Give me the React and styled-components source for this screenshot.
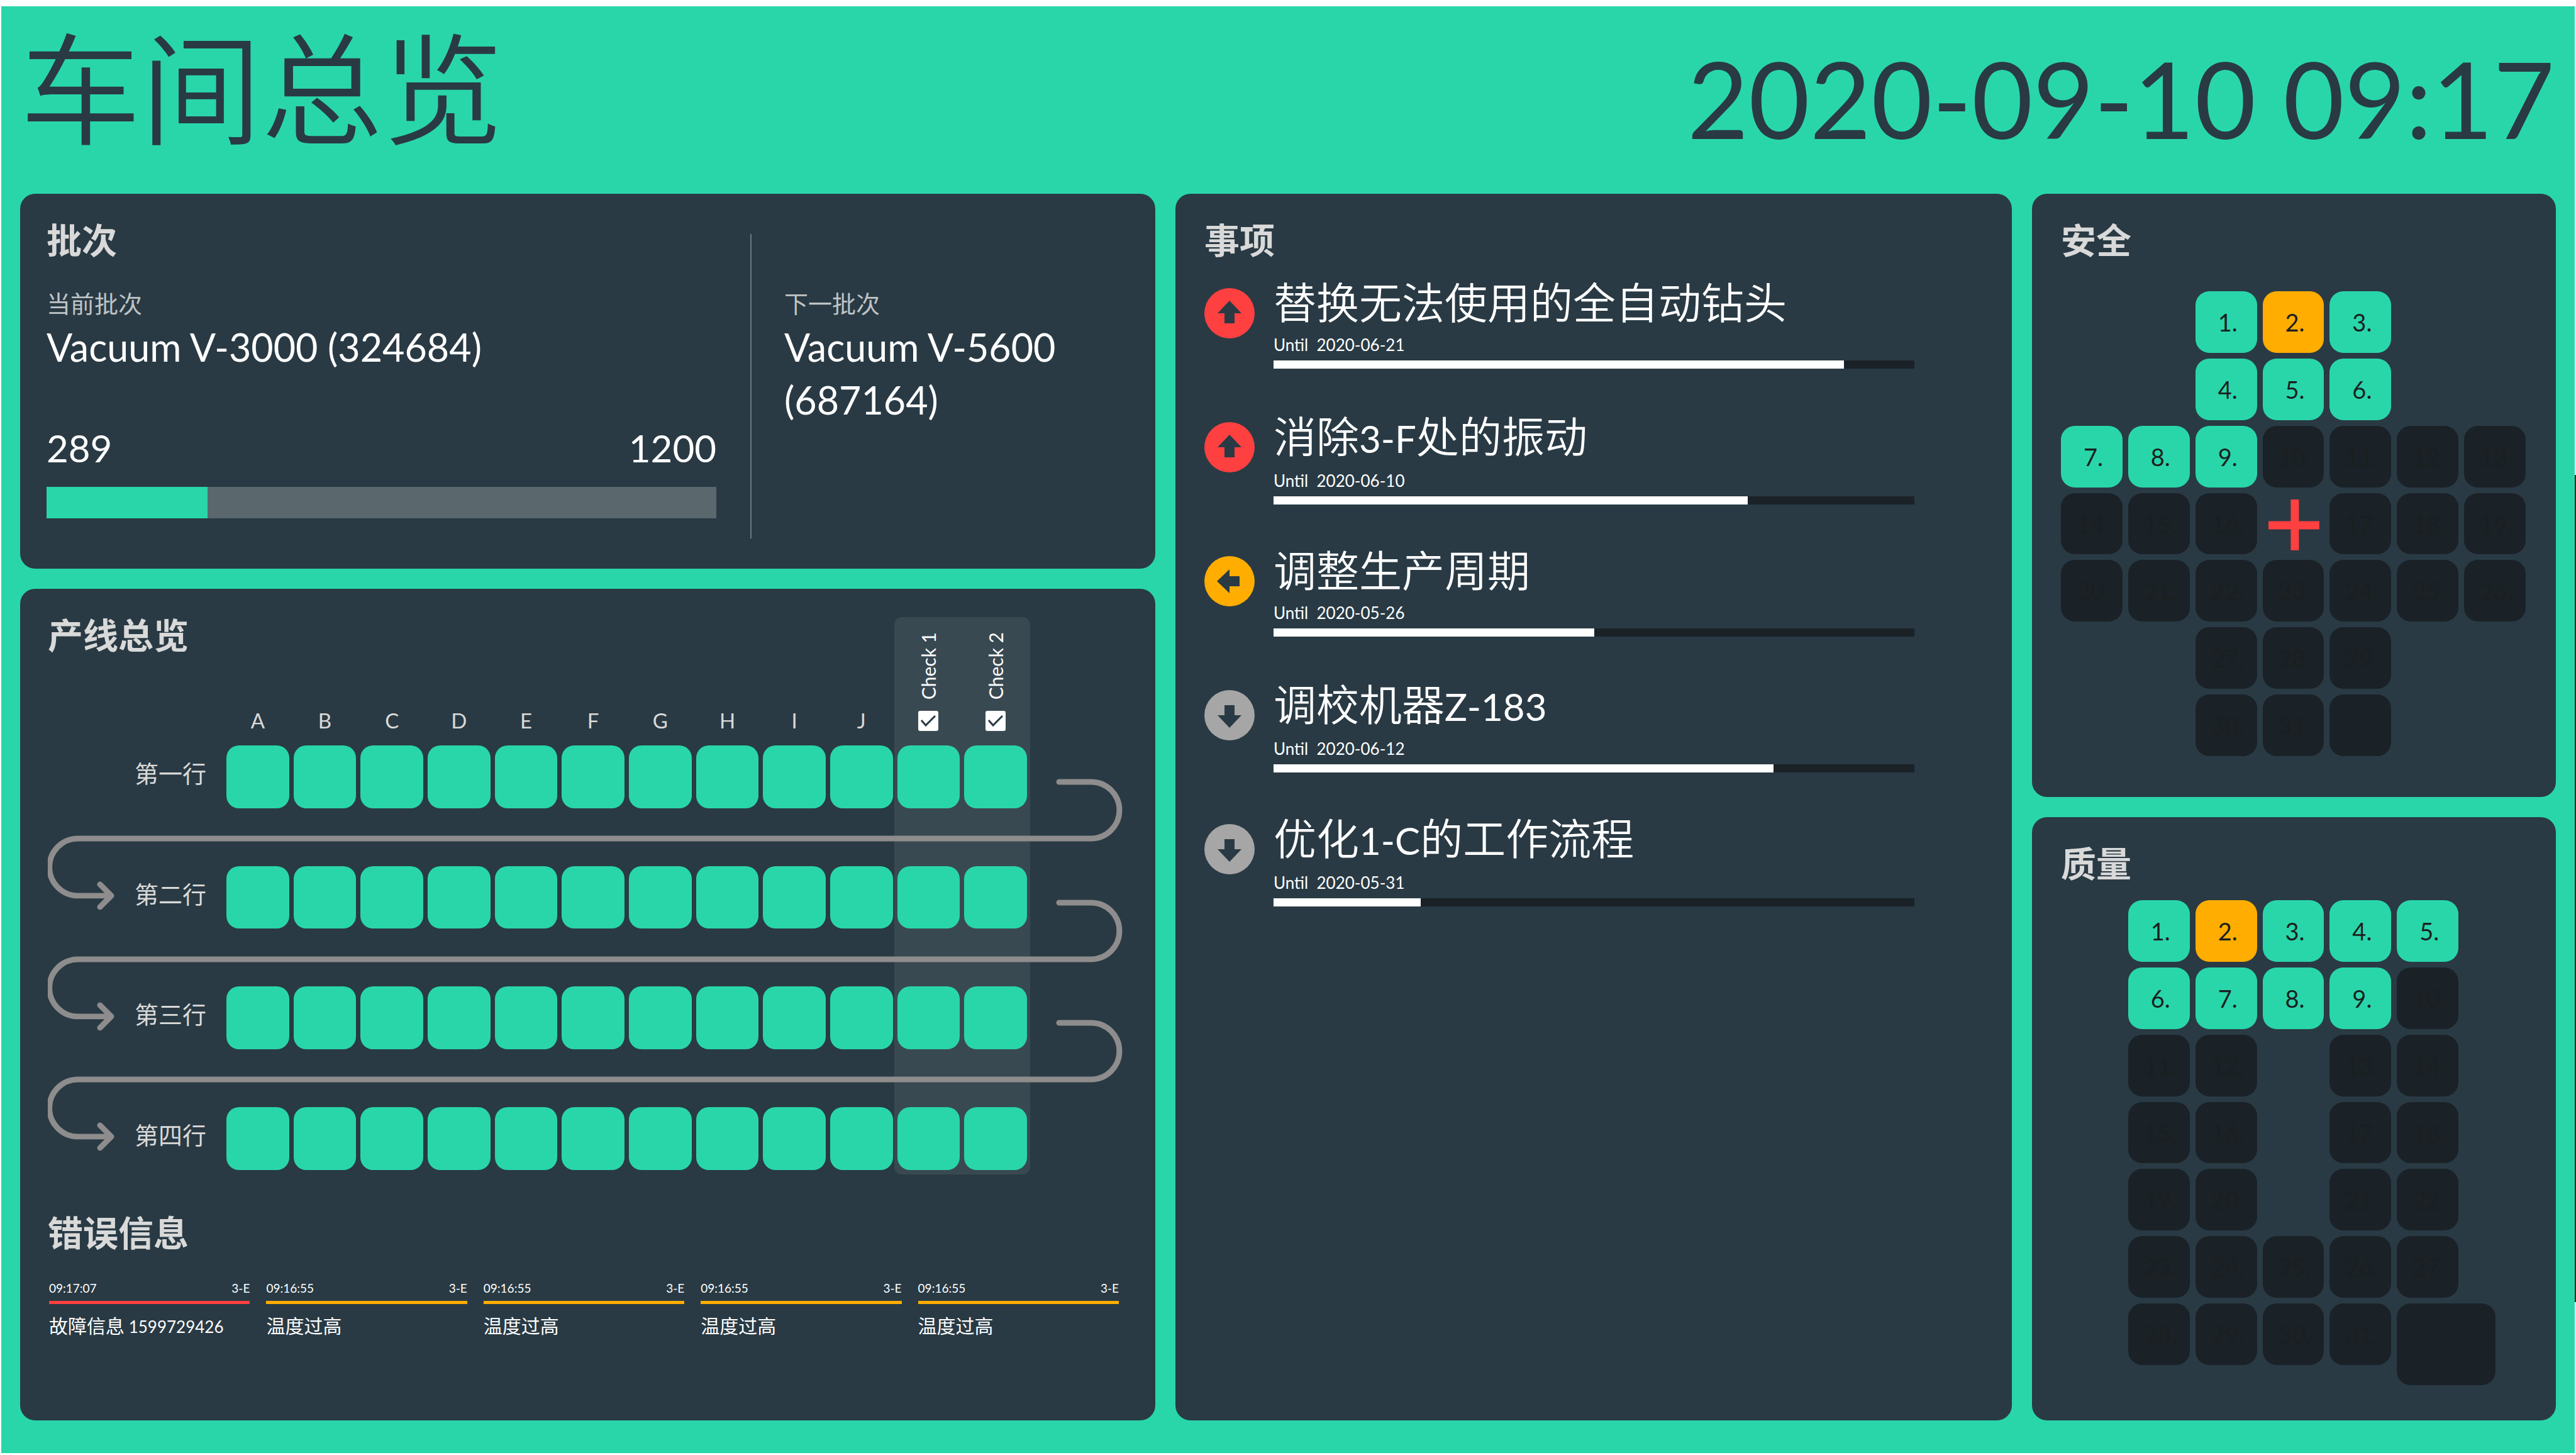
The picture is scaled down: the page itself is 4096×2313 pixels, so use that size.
import React from "react";
import styled, { createGlobalStyle } from "styled-components";

const c = {
  teal: "#29d6aa",
  panel: "#293a44",
  dark: "#1a2127",
  red: "#ff4040",
  orange: "#ffad00",
  grey: "#a6a6a6",
  line: "#8e8c8c",
  muted: "#d9d9d9",
};

const Global = createGlobalStyle`
  * { box-sizing: border-box; }
  body {
    margin: 0;
    background: #fff;
    color: #fff;
    font-family: Lato, "Noto Sans CJK SC", sans-serif;
  }
  h1, h2, h3, p, ul { margin: 0; padding: 0; list-style: none; }
`;

const Screen = styled.div`
  min-height: 100vh;
  display: flex;
  padding: 10px 0 3px 2px;
`;
const Page = styled.div`
  flex: 1;
  min-width: 0;
  display: flex;
  flex-direction: column;
  background: ${c.teal};
`;
const Edge = styled.div`
  width: 2px;
  margin: 745px 0 240px;
  background: ${c.dark};
`;
const Header = styled.header`
  display: flex;
  justify-content: space-between;
  height: 298px;
  padding: 0 32px 0 30px;
  color: ${c.panel};
`;
const Title = styled.h1`
  font-size: 192px;
  line-height: 262px;
  font-weight: 350;
`;
const Clock = styled.time`
  font-size: 168px;
  line-height: 292px;
`;
const Main = styled.main`
  flex: 1;
  display: grid;
  grid-template-columns: minmax(0, 1805fr) minmax(0, 1330fr) minmax(0, 833fr);
  gap: 32px;
  padding: 0 30px 52px;
`;
const Column = styled.div`
  display: flex;
  flex-direction: column;
  gap: 32px;
  min-width: 0;
`;
const Panel = styled.section`
  flex: ${(p) => (p.$grow ? "1 1 0" : "none")};
  padding: 32px 48px 32px 46px;
  border-radius: 24px;
  background: ${c.panel};
`;
const Heading = styled.h2`
  font-size: 56px;
  line-height: 84px;
  font-weight: 700;
  color: ${c.muted};
`;

const BatchPanel = styled(Panel)`
  display: grid;
  grid-template-columns: minmax(0, 1119fr) minmax(0, 600fr);
  padding: 32px 44px 48px 42px;
`;
const Current = styled.div`
  padding: 0 54px 32px 0;
`;
const Next = styled.div`
  margin-top: 32px;
  padding: 82px 80px 0 52px;
  border-left: 2px solid #6c7780;
`;
const Caption = styled.p`
  font-size: 38px;
  line-height: 56px;
  color: #bfc3c6;
`;
const CurrentCaption = styled(Caption)`
  margin-top: 30px;
`;
const Name = styled.p`
  font-size: 61px;
  line-height: 84px;
`;
const Counts = styled.div`
  display: flex;
  justify-content: space-between;
  margin-top: 76px;
  font-size: 60px;
  line-height: 84px;
`;
const Bar = styled.div`
  height: ${(p) => p.$size}px;
  margin-top: ${(p) => p.$gap}px;
  background: ${(p) => p.$track};
`;
const Fill = styled.div`
  height: 100%;
  background: ${(p) => p.$color};
`;

const LinePanel = styled(Panel)`
  padding: 32px 46px 32px 44px;
`;
const Board = styled.div`
  display: grid;
  grid-template-columns: 277px repeat(12, minmax(0, 1fr)) 151px;
  column-gap: 7px;
  margin-top: -71px;
`;
const Zone = styled.div`
  grid-area: 1 / 12 / 6 / 14;
  margin: 0 -5px -7px;
  border-radius: 12px;
  background: rgba(255, 255, 255, 0.08);
`;
const HeadCell = styled.div`
  grid-row: 1;
  grid-column: ${(p) => p.$col};
  height: 204px;
  display: flex;
  align-items: flex-end;
  justify-content: center;
  padding-bottom: 20px;
  font-size: 33px;
  line-height: 40px;
  color: ${c.muted};
`;
const Check = styled.label`
  display: flex;
  flex-direction: column;
  align-items: center;
  gap: 18px;
  padding-bottom: 3px;
  font-size: 30px;
  color: #fff;
`;
const Upright = styled.span`
  writing-mode: vertical-rl;
  transform: rotate(180deg);
`;
const Tick = styled.span`
  display: grid;
  & > * { grid-area: 1 / 1; }
  svg { width: 32px; height: 32px; pointer-events: none; }
`;
const Box = styled.input`
  appearance: none;
  width: 32px;
  height: 32px;
  margin: 0;
  border-radius: 3px;
  background: #fff;
  &:not(:checked) + svg { visibility: hidden; }
`;
const RowLabel = styled.div`
  grid-row: ${(p) => p.$row};
  grid-column: 1;
  justify-self: end;
  padding-right: 25px;
  font-size: 38px;
  line-height: 88px;
  color: ${c.muted};
`;
const Station = styled.div`
  grid-row: ${(p) => p.$row};
  grid-column: ${(p) => p.$col};
  aspect-ratio: 1;
  margin-bottom: ${(p) => (p.$last ? 0 : 92)}px;
  border-radius: 20px;
  background: ${c.teal};
  z-index: 1;
`;
const Connector = styled.svg`
  grid-row: ${(p) => p.$row} / span 2;
  grid-column: 1 / -1;
  align-self: start;
  width: 100%;
  margin-top: 50px;
  fill: none;
  stroke: ${c.line};
  stroke-width: 9;
  stroke-linecap: round;
  stroke-linejoin: round;
`;
const ErrorHeading = styled(Heading)`
  margin-top: 58px;
`;
const Errors = styled.ul`
  display: grid;
  grid-template-columns: repeat(5, minmax(0, 1fr));
  gap: 26px;
  margin-top: 34px;
  padding: 0 12px 0 2px;
`;
const ErrorMeta = styled.div`
  display: flex;
  justify-content: space-between;
  padding-bottom: 8px;
  border-bottom: 5px solid ${(p) => p.$color};
  font-size: 19px;
  line-height: 24px;
`;
const ErrorText = styled.p`
  margin-top: 12px;
  font-size: 30px;
  line-height: 44px;
  white-space: nowrap;
`;
const Latin = styled.span`
  font-size: ${(p) => p.$size}px;
`;

const Tasks = styled.ul`
  display: grid;
  gap: 45px;
  margin-top: 6px;
  padding-right: 107px;
`;
const Task = styled.li`
  display: grid;
  grid-template-columns: 80px minmax(0, 1fr);
  column-gap: 30px;
  height: 168px;
`;
const Badge = styled.svg`
  width: 80px;
  height: 80px;
  margin-top: 28px;
`;
const TaskTitle = styled.h3`
  font-size: 68px;
  line-height: 102px;
  font-weight: 350;
`;
const TaskLatin = styled(Latin)`
  font-weight: 400;
`;
const Until = styled.p`
  font-size: 26px;
  line-height: 32px;
  white-space: pre;
`;

const Calendar = styled.div`
  display: grid;
  grid-template-columns: repeat(7, minmax(0, 1fr));
  gap: 9px;
  margin-top: ${(p) => p.$gap}px;
`;
const Day = styled.div`
  grid-row: ${(p) => p.$row};
  grid-column: ${(p) => p.$col};
  aspect-ratio: 1;
  display: flex;
  align-items: center;
  justify-content: center;
  padding-left: 5px;
  border-radius: 22px;
  background: ${(p) => p.$color};
  color: #1b1f20;
  font-size: 38px;
  line-height: 48px;
`;
const WideDay = styled(Day)`
  aspect-ratio: auto;
  width: 160%;
  height: 130px;
  margin-bottom: -33px;
`;
const Cross = styled.svg`
  grid-row: 4;
  grid-column: 4;
  width: 100%;
`;

const ARROWS = { up: 0, left: -90, down: 180 };
const TASKS = [
  ["替换无法使用的全自动钻头", "2020-06-21", 89, "up", c.red],
  ["消除3-F处的振动", "2020-06-10", 74, "up", c.red],
  ["调整生产周期", "2020-05-26", 50, "left", c.orange],
  ["调校机器Z-183", "2020-06-12", 78, "down", c.grey],
  ["优化1-C的工作流程", "2020-05-31", 23, "down", c.grey],
];
const ERRORS = [
  ["09:17:07", "3-E", "故障信息 1599729426", c.red],
  ["09:16:55", "3-E", "温度过高", c.orange],
  ["09:16:55", "3-E", "温度过高", c.orange],
  ["09:16:55", "3-E", "温度过高", c.orange],
  ["09:16:55", "3-E", "温度过高", c.orange],
];
const ROWS = ["第一行", "第二行", "第三行", "第四行"];
const LETTERS = "ABCDEFGHIJ".split("");
const SAFETY = ["..###..", "..###..", "#######", "###+###", "#######", "..###..", "..###.."];
const QUALITY = [".#####.", ".#####.", ".##.##.", ".##.##.", ".##.##.", ".#####.", ".####W."];

const mixed = (text, Part, size) =>
  text.split(/([\x20-\x7e]+)/).map((s, i) =>
    i % 2 ? <Part key={i} $size={size}>{s}</Part> : s
  );

function DayMap({ plan, gap }) {
  let n = 0;
  const cells = [];
  plan.forEach((line, r) =>
    line.split("").forEach((ch, k) => {
      const key = `${r}-${k}`;
      const place = { $row: r + 1, $col: k + 1 };
      if (ch === "+") {
        cells.push(
          <Cross key={key} viewBox="0 0 98 98" aria-hidden="true">
            <path d="M9 51H90M51 10V91" stroke={c.red} strokeWidth="13" />
          </Cross>
        );
      } else if (ch === "W") {
        cells.push(<WideDay key={key} {...place} $color={c.dark} />);
      } else if (ch === "#") {
        n += 1;
        const color = n > 9 ? c.dark : n === 2 ? c.orange : c.teal;
        cells.push(
          <Day key={key} {...place} $color={color}>{n <= 31 ? `${n}.` : ""}</Day>
        );
      }
    })
  );
  return <Calendar $gap={gap}>{cells}</Calendar>;
}

function Flow({ row }) {
  return (
    <Connector $row={row} viewBox="0 0 1716 214" aria-hidden="true">
      <path d="M1609 8H1660A45 45 0 0 1 1660 98H48A45 45 0 0 0 48 189H101M83 171L101 189L83 207" />
    </Connector>
  );
}

export default function App() {
  return (
    <Screen>
      <Global />
      <Page>
        <Header>
          <Title>车间总览</Title>
          <Clock>2020-09-10 09:17</Clock>
        </Header>
        <Main>
          <Column>
            <BatchPanel>
              <Current>
                <Heading>批次</Heading>
                <CurrentCaption>当前批次</CurrentCaption>
                <Name>Vacuum V-3000 (324684)</Name>
                <Counts><span>289</span><span>1200</span></Counts>
                <Bar $size={50} $gap={20} $track="#5a676d">
                  <Fill $color={c.teal} style={{ width: `${(289 / 1200) * 100}%` }} />
                </Bar>
              </Current>
              <Next>
                <Caption>下一批次</Caption>
                <Name>Vacuum V-5600 (687164)</Name>
              </Next>
            </BatchPanel>
            <LinePanel $grow>
              <Heading>产线总览</Heading>
              <Board>
                <Zone />
                {LETTERS.map((l, i) => <HeadCell key={l} $col={i + 2}>{l}</HeadCell>)}
                {[1, 2].map((n) => (
                  <HeadCell key={n} $col={n + 11}>
                    <Check>
                      <Upright>Check {n}</Upright>
                      <Tick>
                        <Box type="checkbox" defaultChecked />
                        <svg viewBox="0 0 32 32" aria-hidden="true">
                          <path d="M5 15L12 23L27 8" fill="none" stroke={c.panel} strokeWidth="3" />
                        </svg>
                      </Tick>
                    </Check>
                  </HeadCell>
                ))}
                {ROWS.map((name, r) => (
                  <React.Fragment key={name}>
                    <RowLabel $row={r + 2}>{name}</RowLabel>
                    {Array.from({ length: 12 }, (_, k) => (
                      <Station key={k} $row={r + 2} $col={k + 2} $last={r === 3} />
                    ))}
                    {r < 3 && <Flow row={r + 2} />}
                  </React.Fragment>
                ))}
              </Board>
              <ErrorHeading>错误信息</ErrorHeading>
              <Errors>
                {ERRORS.map(([time, place, text, color], i) => (
                  <li key={i}>
                    <ErrorMeta $color={color}><span>{time}</span><span>{place}</span></ErrorMeta>
                    <ErrorText>{mixed(text, Latin, 26)}</ErrorText>
                  </li>
                ))}
              </Errors>
            </LinePanel>
          </Column>
          <Panel>
            <Heading>事项</Heading>
            <Tasks>
              {TASKS.map(([title, until, done, dir, color]) => (
                <Task key={title}>
                  <Badge viewBox="0 0 80 80" aria-hidden="true">
                    <circle cx="40" cy="40" r="40" fill={color} />
                    <path
                      d="M40 20L59 40H48V56H32V40H21Z"
                      fill={c.panel}
                      transform={`rotate(${ARROWS[dir]} 40 40)`}
                    />
                  </Badge>
                  <div>
                    <TaskTitle>{mixed(title, TaskLatin, 60)}</TaskTitle>
                    <Until>{`Until  ${until}`}</Until>
                    <Bar $size={13} $gap={9} $track={c.dark}>
                      <Fill $color="#fff" style={{ width: `${done}%` }} />
                    </Bar>
                  </div>
                </Task>
              ))}
            </Tasks>
          </Panel>
          <Column>
            <Panel $grow>
              <Heading>安全</Heading>
              <DayMap plan={SAFETY} gap={39} />
            </Panel>
            <Panel $grow>
              <Heading>质量</Heading>
              <DayMap plan={QUALITY} gap={16} />
            </Panel>
          </Column>
        </Main>
      </Page>
      <Edge />
    </Screen>
  );
}
